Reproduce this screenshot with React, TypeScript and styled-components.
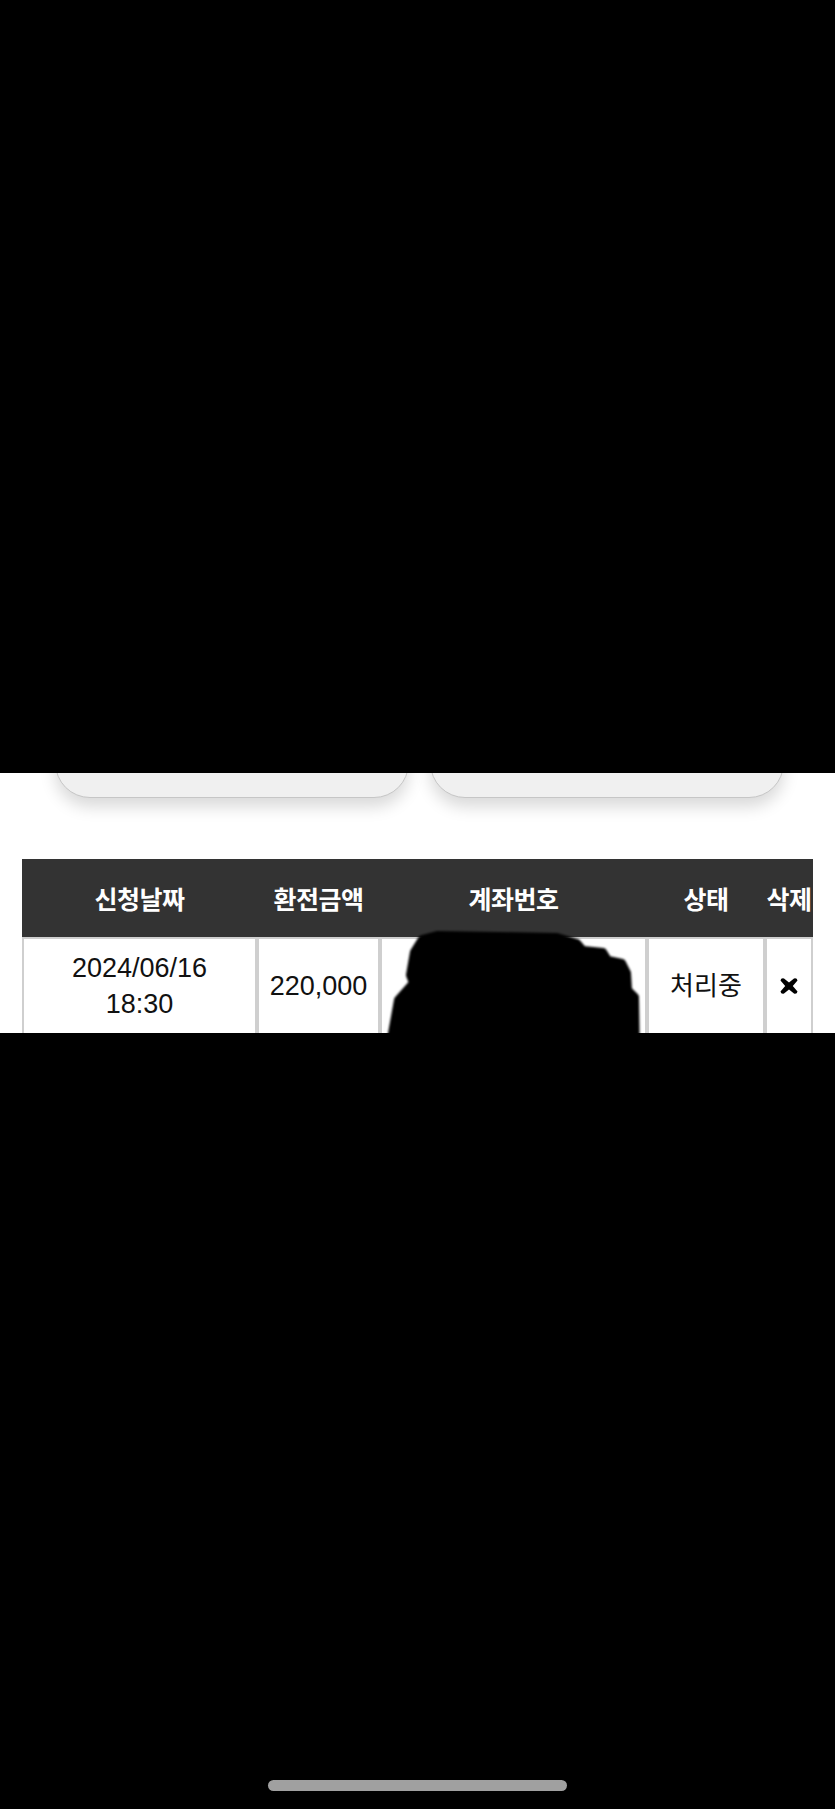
import React from "react";
import styled, { createGlobalStyle } from "styled-components";

const GlobalStyle = createGlobalStyle`
  html, body {
    margin: 0;
    padding: 0;
    background: #000;
  }
  body {
    font-family: "Liberation Sans", "Noto Sans CJK KR", sans-serif;
  }
  * {
    box-sizing: border-box;
  }
`;

const columns = "235px 123px 267px 118px 48px";

const Page = styled.div`
  width: 835px;
  height: 1809px;
  display: flex;
  flex-direction: column;
  background: #000;
  overflow: hidden;
`;

const Shade = styled.div<{ $h: number }>`
  height: ${(p) => p.$h}px;
  flex: none;
  background: #000;
  display: flex;
  flex-direction: column;
  justify-content: flex-end;
  align-items: center;
  padding-bottom: 18px;
`;

const HomeBar = styled.div`
  width: 299px;
  height: 11px;
  border-radius: 6px;
  background: #a0a0a0;
`;

const Visible = styled.div`
  height: 260px;
  flex: none;
  background: #fff;
  overflow: hidden;
  display: flex;
  flex-direction: column;
`;

const CardRow = styled.div`
  display: flex;
  gap: 21px;
  padding-left: 55px;
  margin-top: -95px;
`;

const Card = styled.div`
  width: 354px;
  height: 120px;
  border-radius: 35px;
  background: #f0f0f0;
  border: 1px solid #c6c6c6;
  box-shadow: 0 9px 16px rgba(0, 0, 0, 0.15);
`;

const TableWrap = styled.div`
  position: relative;
  margin: 61px 0 0 22px;
  width: 791px;
`;

const Row = styled.div<{ $head?: boolean }>`
  display: grid;
  grid-template-columns: ${columns};
  background: ${(p) => (p.$head ? "#333333" : "#fff")};
  height: ${(p) => (p.$head ? "78px" : "auto")};
`;

const HeadCell = styled.div`
  display: flex;
  align-items: center;
  justify-content: center;
  color: #fff;
  font-family: "Noto Sans CJK KR", sans-serif;
  font-weight: 700;
  font-size: 25px;
  letter-spacing: -0.5px;
  white-space: nowrap;
  overflow: hidden;
`;

const Cell = styled.div<{ $kr?: boolean }>`
  display: flex;
  align-items: center;
  justify-content: center;
  text-align: center;
  border: 2px solid #cfcfcf;
  padding: 11px 2px 12px;
  color: #111;
  font-size: ${(p) => (p.$kr ? "26px" : "27px")};
  line-height: 36px;
  min-height: 97px;
`;

const Blob = styled.svg`
  position: absolute;
  left: 0;
  top: 0;
  pointer-events: none;
`;

const XMark = () => (
  <svg width="20" height="18" viewBox="0 0 20 18">
    <path
      d="M1.5 3.6 Q2 0.6 5 1.4 L10 5.4 L15 1.4 Q18 0.6 18.5 3.6 L13.8 9 L18.5 14.4 Q18 17.4 15 16.6 L10 12.6 L5 16.6 Q2 17.4 1.5 14.4 L6.2 9 Z"
      fill="#000"
    />
  </svg>
);

const heads = ["신청날짜", "환전금액", "계좌번호", "상태", "삭제"];

export default function App() {
  return (
    <Page>
      <GlobalStyle />
      <Shade $h={773} />
      <Visible>
        <CardRow>
          <Card />
          <Card />
        </CardRow>
        <TableWrap>
          <Row $head>
            {heads.map((h) => (
              <HeadCell key={h}>{h}</HeadCell>
            ))}
          </Row>
          <Row>
            <Cell>
              2024/06/16
              <br />
              18:30
            </Cell>
            <Cell>220,000</Cell>
            <Cell>0000-00-000000</Cell>
            <Cell $kr>처리중</Cell>
            <Cell>
              <XMark />
            </Cell>
          </Row>
          <Blob width="791" height="200" viewBox="0 0 791 200">
            <defs>
              <filter id="soft" x="-5%" y="-5%" width="110%" height="110%">
                <feGaussianBlur stdDeviation="1.2" />
              </filter>
            </defs>
            <path
              filter="url(#soft)"
              d="M415 76 L535 78 L555 84 L561 91 L581 93 L586 101 L600 104 L605 114 L606 131 L613 138 L614 200 L366 200 L369 180 L376 141 L391 124 L388 116 L392 93 L400 80 Z"
              fill="#000"
              stroke="#000"
              strokeWidth="8"
              strokeLinejoin="round"
            />
          </Blob>
        </TableWrap>
      </Visible>
      <Shade $h={776}>
        <HomeBar />
      </Shade>
    </Page>
  );
}
